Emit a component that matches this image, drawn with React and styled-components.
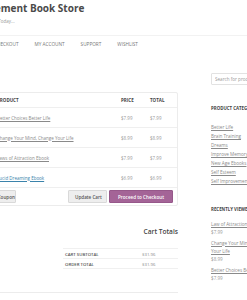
import React from "react";
import styled, { createGlobalStyle } from "styled-components";

const GlobalStyle = createGlobalStyle`
    html, body {
        margin: 0;
        padding: 0;
        background: #ffffff;
        overflow: hidden;
    }
    body {
        font-family: "Open Sans", "DejaVu Sans", sans-serif;
        color: #666;
    }
`;

const cartItems = [
    { name: "Better Choices Better Life", price: "$7.99", visited: true },
    { name: "Change Your Mind, Change Your Life", price: "$8.99", visited: true },
    { name: "Laws of Attraction Ebook", price: "$7.99", visited: true },
    { name: "Lucid Dreaming Ebook", price: "$6.99", visited: false },
];

const categories = [
    "Better Life",
    "Brain Training",
    "Dreams",
    "Improve Memory",
    "New Age Ebooks",
    "Self Esteem",
    "Self Improvement",
];

const recent = [
    { name: "Law of Attraction Ebook", price: "$7.99" },
    { name: "Change Your Mind, Change Your Life", price: "$8.99" },
    { name: "Better Choices Better Life", price: "$7.99" },
];

const App = () => {
    return (
        <>
            <GlobalStyle />
            <DivPage>
                <Header>
                    <SiteTitle>Self Improvement Book Store</SiteTitle>
                    <Tagline>Improve Your Life Today...</Tagline>
                </Header>
                <Nav>
                    <NavItem>Checkout</NavItem>
                    <NavItem>My Account</NavItem>
                    <NavItem>Support</NavItem>
                    <NavItem>Wishlist</NavItem>
                </Nav>
                <DivColumns>
                    <Main>
                        <CartBox>
                            <HeadRow>
                                <CellName>Product</CellName>
                                <CellPrice>Price</CellPrice>
                                <CellTotal>Total</CellTotal>
                            </HeadRow>
                            {cartItems.map((item) => (
                                <ItemRow key={item.name}>
                                    <CellName>
                                        <ProductLink $visited={item.visited}>{item.name}</ProductLink>
                                    </CellName>
                                    <CellPrice>{item.price}</CellPrice>
                                    <CellTotal>{item.price}</CellTotal>
                                </ItemRow>
                            ))}
                            <ActionsRow>
                                <Button>Apply Coupon</Button>
                                <Spacer />
                                <Button>Update Cart</Button>
                                <Button $primary>Proceed to Checkout</Button>
                            </ActionsRow>
                        </CartBox>
                        <Totals>
                            <TotalsTitle>Cart Totals</TotalsTitle>
                            <TotalsTable>
                                <TotalsRow>
                                    <TotalsLabel>Cart Subtotal</TotalsLabel>
                                    <TotalsValue>$31.96</TotalsValue>
                                </TotalsRow>
                                <TotalsRow>
                                    <TotalsLabel>Order Total</TotalsLabel>
                                    <TotalsValue>$31.96</TotalsValue>
                                </TotalsRow>
                            </TotalsTable>
                        </Totals>
                        <BottomRule />
                    </Main>
                    <Sidebar>
                        <SearchBox placeholder="Search for products" />
                        <WidgetTitle>Product Categories</WidgetTitle>
                        <LinkList $gap="11px">
                            {categories.map((c) => (
                                <SideLink key={c}>{c}</SideLink>
                            ))}
                        </LinkList>
                        <WidgetTitle>Recently Viewed</WidgetTitle>
                        <LinkList $gap="6.5px">
                            {recent.map((r) => (
                                <RecentItem key={r.name}>
                                    <RecentLink>{r.name}</RecentLink>
                                    <RecentPrice>{r.price}</RecentPrice>
                                </RecentItem>
                            ))}
                        </LinkList>
                    </Sidebar>
                </DivColumns>
            </DivPage>
        </>
    );
};

//#region Styles

const DivPage = styled.div`
    width: 247px;
    height: 300px;
    overflow: hidden;
`;

const Header = styled.header`
    padding-top: 1px;
    height: 35px;
    box-sizing: border-box;
`;

const SiteTitle = styled.h1`
    margin: 0 0 0 -62px;
    font-size: 10px;
    line-height: 15px;
    font-weight: 700;
    color: #4a4a4a;
    white-space: nowrap;
`;

const Tagline = styled.p`
    margin: 2px 0 0 -40px;
    font-size: 4.5px;
    line-height: 7px;
    color: #999;
    white-space: nowrap;
`;

const Nav = styled.nav`
    display: flex;
    gap: 16px;
    align-items: center;
    height: 15px;
    margin-left: -6px;
    border-top: 1px solid #f2f2f2;
`;

const NavItem = styled.span`
    font-size: 4.7px;
    text-transform: uppercase;
    color: #777;
    white-space: nowrap;
`;

const DivColumns = styled.div`
    display: flex;
    gap: 33px;
    margin-top: 41px;
    margin-left: -6px;
`;

const Main = styled.main`
    width: 184px;
    flex-shrink: 0;
`;

const CartBox = styled.div`
    border: 1px solid #ececec;
    border-radius: 2px;
`;

const Row = styled.div`
    display: grid;
    grid-template-columns: 1fr 29px 27px;
    align-items: center;
    border-bottom: 1px solid #efefef;
    font-size: 4.5px;
`;

const HeadRow = styled(Row)`
    height: 14px;
    font-weight: 700;
    text-transform: uppercase;
    color: #444;
`;

const ItemRow = styled(Row)`
    height: 19px;
    color: #999;
`;

const CellName = styled.div`
    padding-left: 2px;
    white-space: nowrap;
`;

const CellPrice = styled.div``;

const CellTotal = styled.div``;

const ProductLink = styled.a`
    color: ${(p) => (p.$visited ? "#8a8a8a" : "#3b83ab")};
    text-decoration: underline;
    cursor: pointer;
`;

const ActionsRow = styled.div`
    display: flex;
    align-items: center;
    gap: 2px;
    height: 17px;
    padding: 0 4px 0 0;
    margin-left: -18px;
`;

const Spacer = styled.div`
    flex: 1;
`;

const Button = styled.button`
    height: 13px;
    padding: 0 6px;
    border: 1px solid ${(p) => (p.$primary ? "#96588a" : "#d9d9d9")};
    border-radius: 1px;
    background: ${(p) => (p.$primary ? "#a46497" : "#eeeeee")};
    color: ${(p) => (p.$primary ? "#ffffff" : "#555555")};
    font-family: "Open Sans", sans-serif;
    font-size: 4.6px;
    font-weight: 600;
    white-space: nowrap;
    width: ${(p) => (p.$primary ? "64px" : "39px")};
    box-sizing: border-box;
`;

const Totals = styled.section`
    display: flex;
    flex-direction: column;
    align-items: flex-end;
    margin-top: 21px;
`;

const TotalsTitle = styled.h2`
    margin: 0;
    font-size: 6.6px;
    line-height: 10px;
    font-weight: 600;
    color: #444;
`;

const TotalsTable = styled.div`
    width: 115px;
    margin-top: 11px;
    border-top: 1px solid #f0f0f0;
`;

const TotalsRow = styled.div`
    display: grid;
    grid-template-columns: 79px 1fr;
    align-items: center;
    height: 9px;
    border-bottom: 1px solid #f0f0f0;
    font-size: 4.3px;
`;

const TotalsLabel = styled.span`
    padding-left: 2px;
    text-transform: uppercase;
    font-weight: 600;
    color: #555;
`;

const TotalsValue = styled.span`
    color: #888;
`;

const BottomRule = styled.hr`
    margin: 23px 0 0;
    border: 0;
    border-top: 1px solid #ececec;
`;

const Sidebar = styled.aside`
    width: 68px;
    flex-shrink: 0;
    margin-top: -19px;
`;

const SearchBox = styled.input`
    display: block;
    box-sizing: border-box;
    width: 70px;
    height: 12px;
    padding: 0 3px;
    border: 1px solid #e2e2e2;
    border-radius: 1px;
    font-family: "Open Sans", sans-serif;
    font-size: 4.6px;
    color: #666;
    &::placeholder {
        color: #999;
    }
`;

const WidgetTitle = styled.h3`
    margin: 20px 0 0;
    font-size: 4.4px;
    line-height: 7px;
    font-weight: 700;
    text-transform: uppercase;
    color: #444;
    white-space: nowrap;
`;

const LinkList = styled.div`
    display: flex;
    flex-direction: column;
    margin-top: ${(p) => p.$gap};
`;

const SideLink = styled.a`
    font-size: 4.6px;
    line-height: 9px;
    color: #8a8a8a;
    text-decoration: underline;
    white-space: nowrap;
`;

const RecentItem = styled.div`
    display: flex;
    flex-direction: column;
    margin-bottom: 3px;
`;

const RecentLink = styled.a`
    font-size: 4.6px;
    line-height: 8px;
    color: #8a8a8a;
    text-decoration: underline;
    width: 66px;
`;

const RecentPrice = styled.span`
    font-size: 4.6px;
    line-height: 8px;
    color: #999;
`;

//#endregion

export default App;
